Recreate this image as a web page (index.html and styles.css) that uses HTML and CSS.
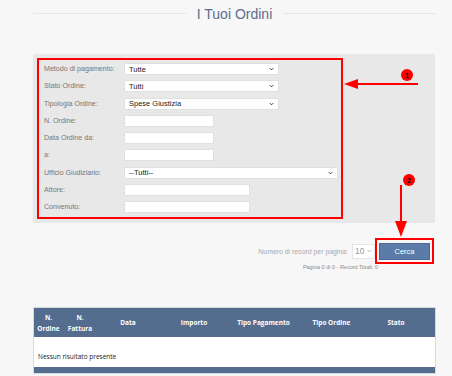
FILE: index.html
```html
<!DOCTYPE html>
<html lang="it">
<head>
    <meta charset="UTF-8">
    <meta name="viewport" content="width=device-width, initial-scale=1.0">
    <link rel="stylesheet" href="styles.css">
    <title>I Tuoi Ordini</title>
</head>
<body>
    <div class="page">
        <div class="heading">
            <span class="rule"></span>
            <h1>I Tuoi Ordini</h1>
            <span class="rule"></span>
        </div>

        <div class="filters">
            <div class="highlight">
                <div class="field">
                    <label>Metodo di pagamento:</label>
                    <div class="select wide"><span>Tutte</span><svg class="chevron" viewBox="0 0 6 4"><path d="M1 1l2 2 2-2"/></svg></div>
                </div>
                <div class="field">
                    <label>Stato Ordine:</label>
                    <div class="select wide"><span>Tutti</span><svg class="chevron" viewBox="0 0 6 4"><path d="M1 1l2 2 2-2"/></svg></div>
                </div>
                <div class="field">
                    <label>Tipologia Ordine:</label>
                    <div class="select wide"><span>Spese Giustizia</span><svg class="chevron" viewBox="0 0 6 4"><path d="M1 1l2 2 2-2"/></svg></div>
                </div>
                <div class="field">
                    <label>N. Ordine:</label>
                    <input class="input short" type="text">
                </div>
                <div class="field">
                    <label>Data Ordine da:</label>
                    <input class="input short" type="text">
                </div>
                <div class="field">
                    <label>a:</label>
                    <input class="input short" type="text">
                </div>
                <div class="field">
                    <label>Ufficio Giudiziario:</label>
                    <div class="select huge"><span>--Tutti--</span><svg class="chevron" viewBox="0 0 6 4"><path d="M1 1l2 2 2-2"/></svg></div>
                </div>
                <div class="field">
                    <label>Attore:</label>
                    <input class="input medium" type="text">
                </div>
                <div class="field">
                    <label>Convenuto:</label>
                    <input class="input medium" type="text">
                </div>
            </div>
        </div>

        <div class="pager">
            <span class="pager_label">Numero di record per pagina:</span>
            <div class="select per_page"><span>10</span><svg class="chevron" viewBox="0 0 6 4"><path d="M1 1l2 2 2-2"/></svg></div>
            <div class="highlight_btn">
                <button class="button">Cerca</button>
            </div>
        </div>
        <div class="totals">Pagina 0 di 0 - Record Totali: 0</div>

        <table class="results">
            <thead>
                <tr>
                    <th class="c1">N.<br>Ordine</th>
                    <th class="c2">N.<br>Fattura</th>
                    <th class="c3">Data</th>
                    <th class="c4">Importo</th>
                    <th class="c5">Tipo Pagamento</th>
                    <th class="c6">Tipo Ordine</th>
                    <th class="c7">Stato</th>
                </tr>
            </thead>
            <tbody>
                <tr>
                    <td colspan="7" class="empty">Nessun risultato presente</td>
                </tr>
            </tbody>
            <tfoot>
                <tr><td colspan="7" class="foot"></td></tr>
            </tfoot>
        </table>
    </div>

    <!-- frecce e numeri di annotazione -->
    <svg class="annotations" width="452" height="376" viewBox="0 0 452 376">
        <g fill="#f00" stroke="#f00">
            <line x1="418" y1="84" x2="355" y2="84" stroke-width="2"/>
            <polygon points="344,84 358,79 358,89" stroke="none"/>
            <line x1="401" y1="185" x2="401" y2="222" stroke-width="2"/>
            <polygon points="401,237 395,221 407,221" stroke="none"/>
            <circle cx="407" cy="75" r="6" stroke="none"/>
            <circle cx="409" cy="180" r="6" stroke="none"/>
        </g>
        <text x="407" y="77.5" class="badge">1</text>
        <text x="409" y="182.5" class="badge">2</text>
    </svg>
</body>
</html>
```

FILE: styles.css
```css
body {
    margin: 0;
    background-color: #f7f7f7;
    font-family: 'Liberation Sans', Arial, sans-serif;
}

.page {
    width: 403px;
    padding-left: 33px;
}

.heading {
    height: 27px;
    display: flex;
    align-items: center;
    gap: 11px;
}

.heading h1 {
    margin: 0;
    font-size: 14px;
    font-weight: normal;
    color: #5b6e8e;
    white-space: nowrap;
}

.rule {
    flex: 1;
    height: 1px;
    background-color: #e6e6e6;
}

.filters {
    margin-top: 27px;
    width: 402px;
    padding: 4px;
    box-sizing: border-box;
    background-color: #e8e8e8;
}

.highlight {
    width: 306px;
    border: 2px solid #f00;
    padding: 3px 0 4px 5px;
    box-sizing: border-box;
    display: flex;
    flex-direction: column;
    gap: 5.3px;
}

.field {
    display: flex;
    align-items: center;
    height: 12px;
}

.field label {
    width: 80px;
    font-size: 7.1px;
    color: #777;
}

.select,
.input {
    height: 12px;
    box-sizing: border-box;
    background-color: #fff;
    border: 1px solid #e0e0e0;
    font-family: 'Liberation Sans', Arial, sans-serif;
    font-size: 7.5px;
    color: #222;
    padding: 0 4px;
    margin: 0;
}

.select {
    display: flex;
    align-items: center;
    justify-content: space-between;
}

.chevron {
    width: 5px;
    height: 4px;
    flex-shrink: 0;
    fill: none;
    stroke: #333;
    stroke-width: 1.2;
}

.wide {
    width: 155px;
}

.huge {
    width: 214px;
}

.short {
    width: 90px;
}

.medium {
    width: 126px;
}

.pager {
    margin-top: 15px;
    height: 26px;
    display: flex;
    justify-content: flex-end;
    align-items: center;
    padding-right: 2px;
}

.pager_label {
    font-size: 6.9px;
    color: #aaa;
    margin-right: 4px;
}

.per_page {
    width: 23px;
    height: 15px;
    font-size: 8.5px;
    color: #999;
    border-color: #e4e4e4;
    padding: 0 2px;
}

.per_page .chevron {
    stroke: #aaa;
}

.highlight_btn {
    border: 2px solid #f00;
    padding: 3px 2px;
    height: 26px;
    box-sizing: border-box;
    display: flex;
    align-items: center;
}

.button {
    width: 51px;
    height: 17px;
    border: 1px solid #4d6a94;
    background-color: #5b7ba8;
    color: #fff;
    font-family: 'Liberation Sans', Arial, sans-serif;
    font-size: 7.5px;
    padding: 0;
}

.totals {
    text-align: right;
    padding-right: 58px;
    margin-top: 0;
    font-size: 5.5px;
    color: #888;
}

.results {
    margin-top: 37px;
    width: 403px;
    border-collapse: collapse;
    table-layout: fixed;
    border: 1px solid #d5d9e0;
    font-family: 'Open Sans', 'Liberation Sans', sans-serif;
}

.results th {
    background-color: #546c8e;
    color: #fff;
    font-size: 6.5px;
    font-weight: bold;
    height: 29px;
    padding: 0;
    line-height: 11px;
    text-align: center;
}

.c1 { width: 29px; }
.c2 { width: 34px; }
.c3 { width: 62px; }
.c4 { width: 70px; }
.c5 { width: 69px; }
.c6 { width: 67px; }
.c7 { padding-right: 8px !important; }

.empty {
    background-color: #fff;
    height: 30px;
    box-sizing: border-box;
    vertical-align: bottom;
    padding: 0 0 6px 4px;
    font-size: 6.5px;
    color: #222;
}

.foot {
    background-color: #546c8e;
    height: 6px;
    padding: 0;
}

.annotations {
    position: absolute;
    top: 0;
    left: 0;
    pointer-events: none;
}

.badge {
    font-family: 'Liberation Sans', Arial, sans-serif;
    font-size: 7px;
    font-weight: bold;
    fill: #111;
    text-anchor: middle;
}
```
